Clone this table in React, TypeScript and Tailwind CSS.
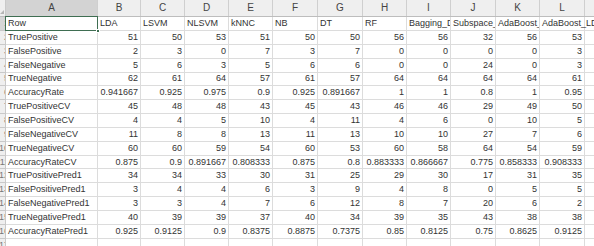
import React from 'react';

// column letters, widths in px (after the narrow row-number strip)
const cols = [
  { key: 'A', w: 92 },
  { key: 'B', w: 43 },
  { key: 'C', w: 44 },
  { key: 'D', w: 44 },
  { key: 'E', w: 44 },
  { key: 'F', w: 45 },
  { key: 'G', w: 45 },
  { key: 'H', w: 44 },
  { key: 'I', w: 44 },
  { key: 'J', w: 45 },
  { key: 'K', w: 44 },
  { key: 'L', w: 45 },
];

const headers = ['LDA', 'LSVM', 'NLSVM', 'kNNC', 'NB', 'DT', 'RF', 'Bagging_DT', 'Subspace_kNN', 'AdaBoost_DT', 'AdaBoost_LDA'];

const rows: [string, (number | string)[]][] = [
  ['TruePositive', [51, 50, 53, 51, 50, 50, 56, 56, 32, 56, 53]],
  ['FalsePositive', [2, 3, 0, 7, 3, 7, 0, 0, 0, 0, 3]],
  ['FalseNegative', [5, 6, 3, 5, 6, 6, 0, 0, 24, 0, 3]],
  ['TrueNegative', [62, 61, 64, 57, 61, 57, 64, 64, 64, 64, 61]],
  ['AccuracyRate', ['0.941667', '0.925', '0.975', '0.9', '0.925', '0.891667', 1, 1, '0.8', 1, '0.95']],
  ['TruePositiveCV', [45, 48, 48, 43, 45, 43, 46, 46, 29, 49, 50]],
  ['FalsePositiveCV', [4, 4, 5, 10, 4, 11, 4, 6, 0, 10, 5]],
  ['FalseNegativeCV', [11, 8, 8, 13, 11, 13, 10, 10, 27, 7, 6]],
  ['TrueNegativeCV', [60, 60, 59, 54, 60, 53, 60, 58, 64, 54, 59]],
  ['AccuracyRateCV', ['0.875', '0.9', '0.891667', '0.808333', '0.875', '0.8', '0.883333', '0.866667', '0.775', '0.858333', '0.908333']],
  ['TruePositivePred1', [34, 34, 33, 30, 31, 25, 29, 30, 17, 31, 35]],
  ['FalsePositivePred1', [3, 4, 4, 6, 3, 9, 4, 8, 0, 5, 5]],
  ['FalseNegativePred1', [3, 3, 4, 7, 6, 12, 8, 7, 20, 6, 2]],
  ['TrueNegativePred1', [40, 39, 39, 37, 40, 34, 39, 35, 43, 38, 38]],
  ['AccuracyRatePred1', ['0.925', '0.9125', '0.9', '0.8375', '0.8875', '0.7375', '0.85', '0.8125', '0.75', '0.8625', '0.9125']],
];

const font = { fontFamily: '"Liberation Sans", Arial, sans-serif' };

// row numbers sit mostly outside the visible strip, as in the cropped sheet
function RowNum({ n, active }: { n: number | string; active?: boolean }) {
  return (
    <div
      className={`w-[6px] shrink-0 overflow-hidden border-r border-b border-[#c9c9c9] flex items-center justify-end text-[9px] text-[#777] ${active ? 'bg-[#d6d6d6]' : 'bg-[#efefef]'}`}
    >
      <span className="translate-x-[4px]">{n}</span>
    </div>
  );
}

function Cell({ w, children, right, last }: { w: number; children?: React.ReactNode; right?: boolean; last?: boolean }) {
  return (
    <div
      style={{ width: w }}
      className={`shrink-0 border-r border-b border-[#dcdcdc] px-[2px] flex items-center whitespace-nowrap ${last ? 'overflow-visible' : 'overflow-hidden'} ${right ? 'justify-end' : 'justify-start'}`}
    >
      {children}
    </div>
  );
}

export default function App() {
  return (
    <div className="w-[594px] h-[246px] overflow-hidden bg-white text-[#333] text-[9px] leading-none" style={font}>
      {/* column header */}
      <div className="flex h-[17px] bg-[#efefef] border-b border-[#bdbdbd]">
        <div className="w-[6px] shrink-0 border-r border-[#c9c9c9] relative">
          <div className="absolute right-[1px] bottom-[2px] w-0 h-0 border-l-[4px] border-l-transparent border-b-[4px] border-b-[#b5b5b5]" />
        </div>
        {cols.map((c) => (
          <div
            key={c.key}
            style={{ width: c.w }}
            className={`shrink-0 border-r border-[#cfcfcf] flex items-center justify-center text-[10px] text-[#444] ${c.key === 'A' ? 'bg-[#d3d3d3]' : ''}`}
          >
            {c.key}
          </div>
        ))}
        <div className="flex-1" />
      </div>

      {/* row 1: labels */}
      <div className="flex h-[14px]">
        <RowNum n={1} active />
        <div style={{ width: 92 }} className="shrink-0 relative border-b border-r border-[#dcdcdc] px-[2px] flex items-center">
          Row
          <div className="absolute -inset-[1px] border-[1.5px] border-[#3f6e52]" />
          <div className="absolute -right-[3px] -bottom-[3px] w-[4px] h-[4px] bg-[#3f6e52] border border-white" />
        </div>
        {headers.map((h, i) => (
          <Cell key={h} w={cols[i + 1].w} last={i === headers.length - 1}>
            {h}
          </Cell>
        ))}
        <div className="flex-1 border-b border-[#dcdcdc]" />
      </div>

      {rows.map(([label, vals], r) => (
        <div key={label} className="flex h-[13.85px]">
          <RowNum n={r + 2} />
          <Cell w={92}>{label}</Cell>
          {vals.map((v, i) => (
            <Cell key={i} w={cols[i + 1].w} right>
              {v}
            </Cell>
          ))}
          <div className="flex-1 border-b border-[#dcdcdc]" />
        </div>
      ))}

      {/* empty trailing row */}
      <div className="flex h-[14px]">
        <RowNum n={17} />
        {cols.map((c) => (
          <Cell key={c.key} w={c.w} />
        ))}
        <div className="flex-1" />
      </div>
    </div>
  );
}
